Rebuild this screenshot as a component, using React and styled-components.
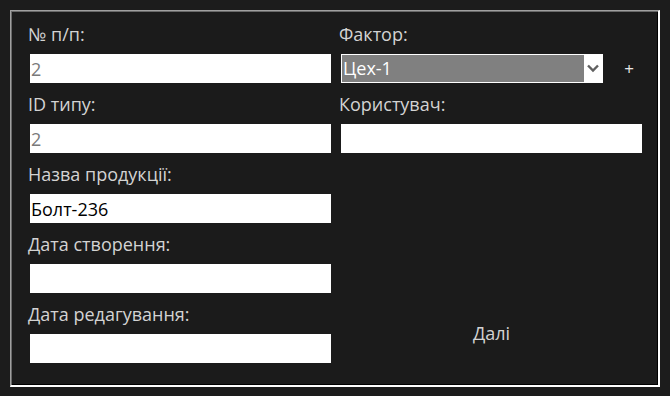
import React, { useState } from "react";
import styled, { createGlobalStyle } from "styled-components";

const GlobalStyle = createGlobalStyle`
  html, body {
    margin: 0;
    padding: 0;
    background: #1c1c1c;
  }
  body {
    font-family: "Open Sans", "Noto Sans", "Liberation Sans", sans-serif;
  }
`;

const Page = styled.div`
  width: 670px;
  height: 396px;
  padding: 10px;
  box-sizing: border-box;
  background: #1c1c1c;
`;

const Panel = styled.div`
  width: 650px;
  height: 377px;
  box-sizing: border-box;
  border-style: solid;
  border-width: 1px 2px 2px 1px;
  border-color: #a0a0a0 #ffffff #ffffff #a0a0a0;
  box-shadow: inset 1px 1px 0 #696969, inset -1px -1px 0 #000000;
  background: #1b1b1b;
  padding: 10px 15px 20px 19px;
  display: grid;
  grid-template-columns: 301px 1fr;
  column-gap: 10px;
`;

const Column = styled.div`
  display: flex;
  flex-direction: column;
  gap: 8px;
`;

const Field = styled.div`
  display: flex;
  flex-direction: column;
`;

const Label = styled.label`
  height: 26px;
  line-height: 26px;
  margin-bottom: 7px;
  margin-left: -2px;
  font-size: 18px;
  color: #d3d3d3;
  white-space: nowrap;
`;

const TextInput = styled.input`
  width: ${({ $width }) => $width || 301}px;
  height: 29px;
  box-sizing: border-box;
  border: none;
  outline: none;
  padding: 0 1px;
  margin: 0;
  font-family: inherit;
  font-size: 18px;
  color: ${({ disabled }) => (disabled ? "#7a7a7a" : "#000000")};
  background: #ffffff;
`;

const SelectRow = styled.div`
  display: flex;
  align-items: center;
`;

const SelectBox = styled.div`
  width: 262px;
  height: 29px;
  box-sizing: border-box;
  border: 1px solid #ffffff;
  background: #ffffff;
  display: flex;
`;

const SelectValue = styled.div`
  flex: 1;
  background: #808080;
  color: #ffffff;
  font-size: 18px;
  line-height: 27px;
  padding-left: 1px;
`;

const SelectArrow = styled.div`
  width: 18px;
  display: flex;
  align-items: center;
  justify-content: center;
`;

const PlusButton = styled.button`
  width: 36px;
  height: 29px;
  margin-left: 8px;
  border: none;
  background: transparent;
  color: #e8e8e8;
  font-family: inherit;
  font-size: 17px;
  padding: 0;
  cursor: pointer;
`;

const NextButton = styled.button`
  margin-top: auto;
  margin-bottom: 10px;
  width: 301px;
  height: 44px;
  border: none;
  background: transparent;
  color: #d3d3d3;
  font-family: inherit;
  font-size: 18px;
  cursor: pointer;
`;

const leftFields = [
  { label: "№ п/п:", value: "2", disabled: true },
  { label: "ID типу:", value: "2", disabled: true },
  { label: "Назва продукції:", value: "Болт-236" },
  { label: "Дата створення:", value: "" },
  { label: "Дата редагування:", value: "" },
];

function App() {
  const [user, setUser] = useState("");

  return (
    <Page>
      <GlobalStyle />
      <Panel>
        <Column>
          {leftFields.map((f) => (
            <Field key={f.label}>
              <Label>{f.label}</Label>
              <TextInput defaultValue={f.value} disabled={f.disabled} />
            </Field>
          ))}
        </Column>
        <Column>
          <Field>
            <Label>Фактор:</Label>
            <SelectRow>
              <SelectBox>
                <SelectValue>Цех-1</SelectValue>
                <SelectArrow>
                  <svg width="12" height="9" viewBox="0 0 12 9">
                    <path
                      d="M1 1.5 L6 6.5 L11 1.5"
                      fill="none"
                      stroke="#606060"
                      strokeWidth="2.4"
                    />
                  </svg>
                </SelectArrow>
              </SelectBox>
              <PlusButton>+</PlusButton>
            </SelectRow>
          </Field>
          <Field>
            <Label>Користувач:</Label>
            <TextInput value={user} onChange={(e) => setUser(e.target.value)} />
          </Field>
          <NextButton>Далі</NextButton>
        </Column>
      </Panel>
    </Page>
  );
}

export default App;
